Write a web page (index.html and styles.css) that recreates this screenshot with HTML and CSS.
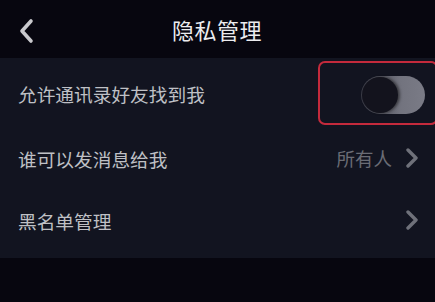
FILE: index.html
```html
<!DOCTYPE html>
<html lang="zh-CN">
<head>
    <meta charset="UTF-8">
    <meta name="viewport" content="width=device-width, initial-scale=1.0">
    <link rel="stylesheet" href="styles.css">
</head>
<body>
    <div class="screen">
        <div class="top-bar">
            <svg class="back" width="16" height="26" viewBox="0 0 16 26">
                <path d="M13 3 L4 13 L13 23" fill="none" stroke="#c9c9cd" stroke-width="3.6" stroke-linecap="round" stroke-linejoin="round"/>
            </svg>
            <div class="title">隐私管理</div>
        </div>

        <div class="settings">
            <div class="row row-first">
                <span class="label">允许通讯录好友找到我</span>
                <div class="highlight">
                    <div class="switch">
                        <div class="knob"></div>
                    </div>
                </div>
            </div>
            <div class="row row-mid">
                <span class="label">谁可以发消息给我</span>
                <div class="right">
                    <span class="value">所有人</span>
                    <svg class="arrow" width="14" height="20" viewBox="0 0 14 20">
                        <path d="M3 2 L11 10 L3 18" fill="none" stroke="#6f717a" stroke-width="3.4" stroke-linecap="round" stroke-linejoin="round"/>
                    </svg>
                </div>
            </div>
            <div class="row row-last">
                <span class="label">黑名单管理</span>
                <div class="right">
                    <svg class="arrow" width="14" height="20" viewBox="0 0 14 20">
                        <path d="M3 2 L11 10 L3 18" fill="none" stroke="#6f717a" stroke-width="3.4" stroke-linecap="round" stroke-linejoin="round"/>
                    </svg>
                </div>
            </div>
        </div>
    </div>
</body>
</html>
```

FILE: styles.css
```css
/* page */
body {
    margin: 0;
    background-color: #07060f;
    font-family: "Noto Sans CJK SC", "Noto Sans", sans-serif;
}

.screen {
    width: 435px;
    height: 302px;
    overflow: hidden;
    background-color: #07060f;
}

/* header */
.top-bar {
    height: 58px;
    display: flex;
    align-items: center;
    justify-content: center;
    position: relative;
}

.back {
    position: absolute;
    left: 18px;
    top: 18px;
}

.title {
    color: #ececef;
    font-size: 22px;
    letter-spacing: 0.5px;
    margin-left: -1px;
}

/* list */
.settings {
    background-color: #121420;
    padding-bottom: 6px;
}

.row {
    display: flex;
    align-items: center;
    justify-content: space-between;
    padding-left: 18px;
}

.row-first {
    height: 70px;
}

.row-mid {
    height: 60px;
    padding-right: 16px;
}

.row-last {
    height: 64px;
    padding-right: 16px;
}

.label {
    color: #bfc0c5;
    font-size: 18.7px;
}

.right {
    display: flex;
    align-items: center;
    gap: 13px;
}

.value {
    color: #6a6c75;
    font-size: 18.5px;
}

/* toggle with the red mark round it */
.highlight {
    width: 120px;
    height: 64px;
    border: 2px solid #c42a3c;
    border-radius: 7px;
    margin-right: -3px;
    display: flex;
    align-items: center;
    justify-content: flex-end;
    padding-right: 11px;
    box-sizing: border-box;
}

.switch {
    width: 64px;
    height: 38px;
    border-radius: 19px;
    background: linear-gradient(90deg, #3a3b46 0%, #72737e 60%, #7a7b86 100%);
    display: flex;
    align-items: center;
    padding-left: 1px;
    box-sizing: border-box;
    margin-top: 4px;
}

.knob {
    width: 36px;
    height: 36px;
    border-radius: 50%;
    background-color: #13131d;
    box-shadow: 2px 0 3px rgba(0, 0, 0, 0.5);
}
```
